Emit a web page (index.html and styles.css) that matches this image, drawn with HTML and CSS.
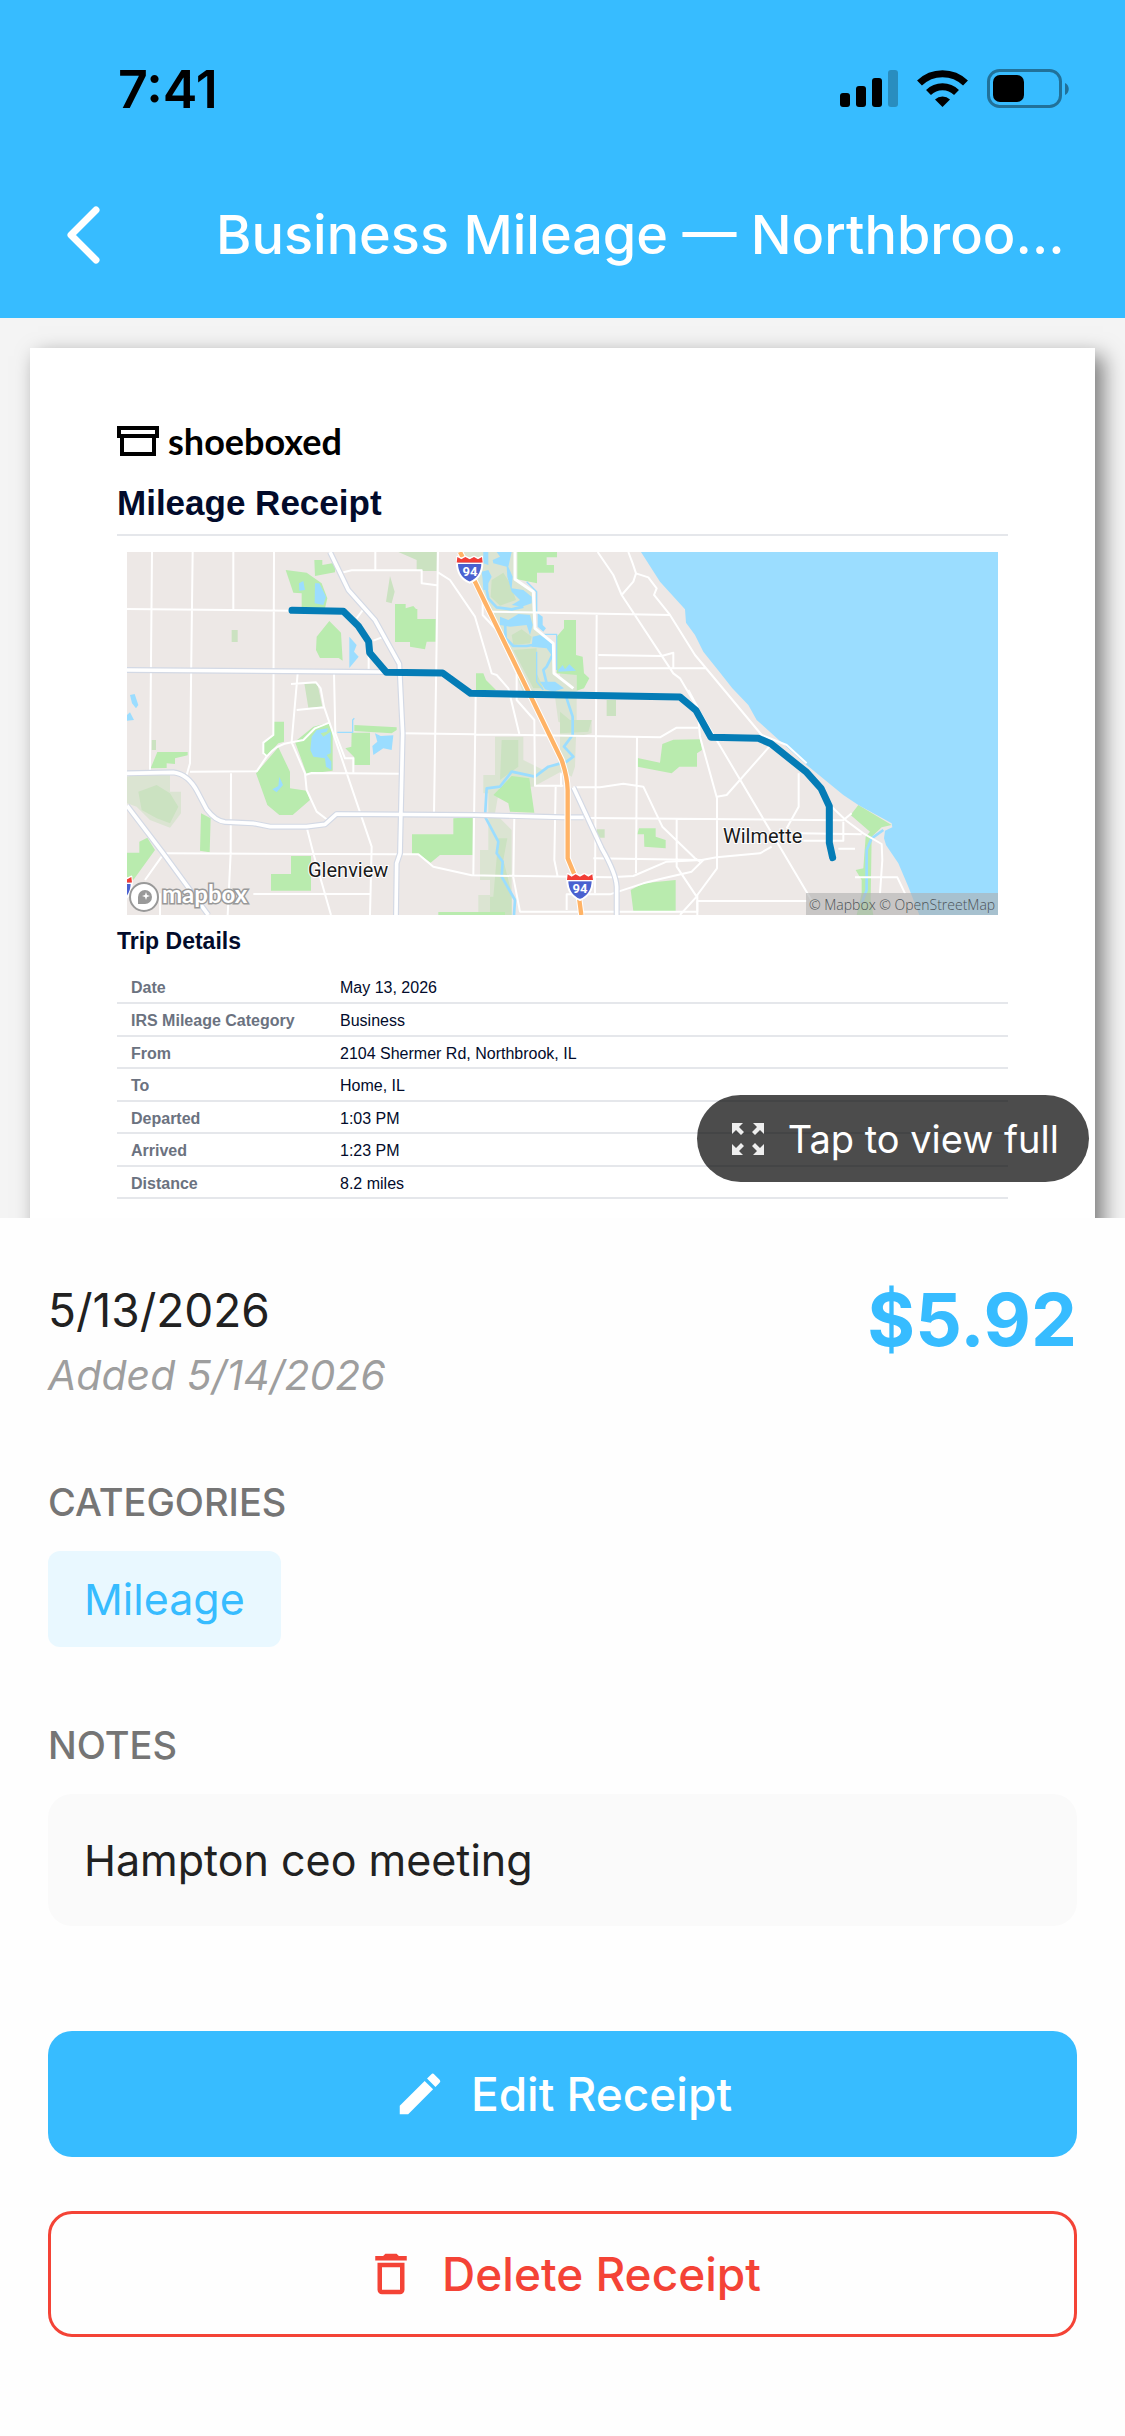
FILE: index.html
```html
<!DOCTYPE html>
<html lang="en">
<head>
    <meta charset="UTF-8">
    <meta name="viewport" content="width=device-width, initial-scale=1.0">
    <title>Business Mileage</title>
    <link rel="stylesheet" href="styles.css">
</head>
<body>
    <header class="app-header">
        <div class="status-bar">
            <span class="time">7:41</span>
            <svg class="status-icons" width="230" height="40" viewBox="0 0 230 40">
                <rect x="0" y="24" width="10" height="14" rx="3"/>
                <rect x="16" y="17" width="10" height="21" rx="3"/>
                <rect x="32" y="9" width="10" height="29" rx="3"/>
                <rect x="48" y="1" width="10" height="37" rx="3" opacity="0.25"/>
                <path d="M79.500 14A33 33 0 0 1 125.500 14" fill="none" stroke="#000" stroke-width="7"/>
                <path d="M88.500 23.500A20 20 0 0 1 116.500 23.500" fill="none" stroke="#000" stroke-width="7"/>
                <path d="M95 30.500A11 11 0 0 1 110 30.500L102.500 38Z"/>
                <rect x="148.500" y="1.500" width="72" height="36" rx="11" fill="none" stroke="#000" stroke-width="3" opacity="0.4"/>
                <rect x="153" y="6" width="31" height="27" rx="7"/>
                <path d="M225 14c5 2 5 10 0 12z" opacity="0.4"/>
            </svg>
        </div>
        <div class="nav-bar">
            <button class="back" type="button" aria-label="Back">
                <svg width="40" height="64" viewBox="0 0 40 64"><path d="M33 7L8 32L33 57" fill="none" stroke="#fff" stroke-width="7" stroke-linecap="round" stroke-linejoin="round"/></svg>
            </button>
            <h1>Business Mileage — Northbroo…</h1>
        </div>
    </header>

    <main>
        <section class="preview">
            <div class="paper">
                <div class="brand">
                    <svg width="43" height="32" viewBox="0 0 43 32" fill="none" stroke="#000" stroke-width="4">
                        <path d="M2 3H40V11H2Z M5 11V29H37V11"/>
                    </svg>
                    <span>shoeboxed</span>
                </div>
                <h2>Mileage Receipt</h2>
                <svg class="map" viewBox="0 0 871 363">
                    <rect width="871" height="363" fill="#ede8e6"/>
                    <g transform="scale(0.33333) translate(-51 -36)">
                        <!-- forest preserves -->
                        <g fill="#dbe4d2">
                            <path d="M1060 36H1220V118L1275 155L1278 262L1335 310L1332 400L1380 440V560L1345 545L1335 470L1240 460L1175 290L1110 150Z"/>
                            <path d="M1155 590H1240V660L1300 690L1380 650V680L1270 740L1170 735L1155 820L1205 870V1125H1105V1065H1140V1020H1110V930H1135V760H1120V705H1155Z"/>
                            <path d="M51 710L120 690H180V755H213V820L180 863L120 840L80 800L51 790Z"/>
                            <path d="M1350 400H1400V560L1445 540V580L1398 590L1395 680L1385 710L1350 690Z"/>
                        </g>
                        <g fill="#cbe2c1">
                            <path d="M865 36H980V93H920V60Z M840 108L854 155L845 190L828 185Z M365 270H383V306H365Z M583 430H622L637 500L595 503Z"/>
                            <path d="M85 755L140 735L180 760L205 800L180 850L140 835L95 810Z M1145 120L1180 98L1200 130L1218 180L1170 197L1142 170Z M1205 285L1235 268L1265 290L1260 310L1210 315Z M1210 330L1280 325V400L1300 445H1270Z"/>
                            <path d="M1175 600H1225V680L1170 720Z M1165 895H1192L1180 960L1205 1060V1125H1140V1070H1150Z M1350 515L1380 540L1445 540L1435 575L1350 580Z M1490 480H1518V528H1490Z M1460 868H1484V893H1460Z M125 600H138V630H125Z"/>
                        </g>
                        <!-- parks -->
                        <g fill="#b9ebae">
                            <path d="M527 90L590 98L635 130L652 175L645 205H575V160L550 158Z M613 60H637V75L675 68V97L615 108Z M658 243L693 278L698 362L686 354H630L618 330L620 290Z"/>
                            <path d="M855 192H887V205L910 198L918 207H922V237H977V305H950L945 328L900 320V306H855Z"/>
                            <path d="M1222 36H1341V52H1310V75H1332V98H1281V130L1222 118Z M1340 290L1362 265V240H1398V345L1418 350L1422 400L1438 415L1422 445L1400 452V405L1340 400Z"/>
                            <path d="M1098 400H1120L1128 420L1158 450H1098Z M492 545H522V605L505 610L470 648L460 645V605L492 585Z M505 622L540 695V745L590 752L600 780L548 825H508L472 795L438 700Z"/>
                            <path d="M555 605L610 560L655 548L668 575V692L590 702Z M733 555L860 562V570L845 580L733 573Z M725 578H780V675H733V652L706 625L724 620Z"/>
                            <path d="M142 636H233V646L195 655V672L170 670V684L122 685Z M273 820L302 835L299 937L270 932Z M51 938H88V905L112 893L135 930L70 1020L51 1012Z M543 948H603V1052H483V1002H543Z"/>
                            <path d="M1030 835L1088 832V945H990L962 968L930 945H906V883H1030Z M1150 765L1205 708L1258 715L1273 818L1200 815L1195 790Z M985 1116H1185V1125H985Z"/>
                            <path d="M1583 654L1650 668L1657 612L1690 599L1770 598L1776 630L1761 640V680H1708L1685 700L1583 680Z M1587 865H1637V890L1667 900V925L1603 920L1602 883H1582Z M1562 1050L1600 1030L1697 1020V1113H1570Z"/>
                            <path d="M2245 795L2345 855L2315 862L2285 890L2282 1080L2290 1125H2240L2255 1060V1020L2237 990L2260 985L2267 890L2280 875L2222 825Z"/>
                        </g>
                        <!-- water -->
                        <path d="M1593 36L1650 125L1725 208L1728 248L1755 285L1780 335L1828 395L1867 445L1915 495L1940 540L2010 603L2090 675L2200 765L2245 795L2345 850L2347 862L2325 872L2322 895L2328 915L2365 970L2395 1040L2428 1125H2664V36Z" fill="#9bddff"/>
                        <g fill="#9bddff">
                            <path d="M567 130L580 123L585 150L568 152Z M615 130H628L648 170L640 195L614 190Z M718 290L740 315L732 335L746 350L718 384Z M60 465L74 462L85 495L78 505L66 490Z M51 525L60 517L72 540L51 542Z"/>
                            <path d="M605 590L620 570L655 565L650 575L632 580L640 590L662 575V640L650 645L664 665V690L648 680L645 655L610 650L601 630Z M795 580L812 588L850 586L845 630L820 625L790 645L787 618L802 605Z M508 710L519 735L500 757L487 748L505 738Z"/>
                            <path d="M1120 36H1135V75L1120 70Z M1160 36H1205L1195 80L1208 110L1205 145L1240 150L1265 170V190L1235 200L1205 195L1230 180L1205 155L1192 110L1190 80L1150 70L1148 60L1170 50Z M1115 95L1135 90L1145 110L1135 130V150L1120 150L1118 120Z M1170 230L1195 240L1225 222L1260 225L1268 255L1260 285L1250 255L1200 260L1170 255Z M1268 290L1290 285L1330 310L1328 350L1310 325L1265 320Z M1283 220L1298 230V255L1308 265L1300 275L1283 260Z M1290 425L1335 425L1362 445L1330 455L1305 448Z M1345 390L1358 375L1365 388L1378 373L1398 392L1345 395Z"/>
                        </g>
                        <g fill="none" stroke="#9bddff" stroke-width="8" stroke-linejoin="round">
                            <path d="M1128 140L1135 175L1160 202L1205 208L1240 200M1185 245L1187 295L1210 318H1250L1285 312M1330 340L1310 380L1300 390L1310 430M1365 460L1388 530V585L1362 620L1390 650L1370 665L1315 680L1275 710L1205 695L1170 740L1130 745L1125 830L1165 905L1160 940L1178 965L1175 1010L1215 1080L1212 1125"/>
                            <path d="M1250 125L1280 155V215M1280 335V425L1300 450M1300 283H1340V390M682 577H728V540L733 535" stroke-width="4"/>
                            <path d="M2320 870L2285 895L2270 930V1050L2255 1090"/>
                        </g>
                        <!-- small streets -->
                        <g fill="none" stroke="#fff" stroke-width="6" stroke-linejoin="round">
                            <path d="M126 36L120 690M248 36L240 670L230 705M370 36V208M492 36L490 585L460 608V640L470 648M51 207L540 212M796 36V90M700 97L725 91H935V130L980 136M984 36L972 822M984 97L1020 120L1095 230L1145 400L1160 405L1195 445L1228 582M1118 160V225L1160 270L1220 400V480L1273 540L1275 737H1360"/>
                            <path d="M740 235L760 208M790 302L822 290M776 340V390M563 400L545 605M543 432L618 427L632 445L642 500L690 640L785 920L780 1125M560 510L642 502M672 400L676 580L705 655H730V697M240 695L440 694L470 650Q500 612 545 607L580 600L615 565L658 548M545 607L585 700L590 750L620 815L650 838M585 705L605 699L875 701"/>
                            <path d="M880 580L1380 587L1650 592L1700 563H1765M1097 470L1090 1005M363 700L362 940L353 1125M155 940L870 943H925L970 980L1085 1006L1500 1012L1570 1008L1670 965L1775 960L1820 952L1950 940L1985 920M155 950L105 1020M590 862L610 940L663 1125M430 1062H780M1213 830L1210 1012L1230 1115H1762V1083H2090M1337 740L1333 960L1343 1010M150 1060V1125M1353 700V740"/>
                            <path d="M1145 215L1400 220L1680 225M1460 225L1455 1060M1465 345L1655 348L1690 338V385M1465 385H1790M1463 36L1510 105L1535 165L1690 400L1710 415L1725 440L2110 1090M1555 36L1568 70L1578 100L1570 125L1535 165M1578 100L1615 112L1640 145L1632 165L1680 225L1755 345L1955 585L2030 615L2090 670"/>
                            <path d="M1215 36V118L1270 155L1275 265L1330 310L1332 400L1390 445" stroke-width="9"/>
                            <path d="M1735 450L1762 500L1770 590L1821 775V985L1762 1065V1125M1821 770L1850 765L1978 620M1581 592L1578 1000M1390 742H1470L1540 731L1600 740L1657 860L1755 955L1770 965M1350 833L2200 841L2225 820M1700 837V980L1760 1070L1710 1125M1450 955L1780 960L1745 995L1660 1015L1600 1030L1500 1063H1370V1110M2066 700V800L2030 865M2070 880L2255 883M2080 902H2200V845M2165 800L2210 843L2260 880L2315 912L2317 960L2310 1060M2185 926H2235M2235 1012H2362L2385 1060"/>
                        </g>
                        <!-- main roads -->
                        <g fill="none" stroke-linejoin="round">
                            <path d="M51 390L830 396M660 36L715 150L795 240L868 372L878 580L870 940L860 970L858 1125M51 700L190 697Q235 703 262 755L290 808Q315 842 345 846L430 850L480 860H590L645 853L680 822L1100 825L1360 832H1420M51 797L160 940L295 1125M1390 742L1475 925Q1518 1000 1520 1040V1125" stroke="#d3d9e5" stroke-width="18"/>
                            <path d="M51 390L830 396M660 36L715 150L795 240L868 372L878 580L870 940L860 970L858 1125M51 700L190 697Q235 703 262 755L290 808Q315 842 345 846L430 850L480 860H590L645 853L680 822L1100 825L1360 832H1420M51 797L160 940L295 1125M1390 742L1475 925Q1518 1000 1520 1040V1125" stroke="#fff" stroke-width="11"/>
                        </g>
                        <path d="M1050 36L1095 125L1355 660Q1372 710 1373 750V955L1400 1020L1414 1125" fill="none" stroke="#fff" stroke-width="19"/>
                        <path d="M1050 36L1095 125L1355 660Q1372 710 1373 750V955L1400 1020L1414 1125" fill="none" stroke="#ffb366" stroke-width="13"/>
                        <!-- trip -->
                        <path d="M546 211L700 214L745 258L776 305L779 338L829 397L998 399L1082 460L1710 471L1758 511L1803 592L1945 595L1983 611L2090 697L2133 745L2158 799V908L2168 953" fill="none" stroke="#047cb6" stroke-width="21" stroke-linecap="round" stroke-linejoin="round"/>
                        <!-- interstate shields -->
                        <g id="shield" stroke-linejoin="round">
                            <path d="M1042 50L1054 56L1066 50L1079 56L1092 50L1104 56L1116 50Q1124 110 1079 128Q1034 110 1042 50Z" fill="#4a61d0" stroke="#fff" stroke-width="6"/>
                            <path d="M1042 51L1054 58L1066 51L1079 58L1092 51L1104 58L1116 51L1118 68H1040Z" fill="#f23d35"/>
                            <path d="M1039 70H1119" stroke="#fff" stroke-width="4"/>
                        </g>
                        <use href="#shield" x="331" y="952"/>
                        <use href="#shield" x="-1052" y="960"/>
                    </g>
                    <g class="shield-label" text-anchor="middle">
                        <text x="343" y="24">94</text>
                        <text x="453" y="341">94</text>
                    </g>
                    <g class="town">
                        <text x="181" y="325">Glenview</text>
                        <text x="596" y="291">Wilmette</text>
                    </g>
                    <g stroke="#999" stroke-width="2">
                        <circle cx="17" cy="345" r="14" fill="#fff"/>
                        <path d="M11 352V345A7 7 0 1 1 18 352Z" fill="#999" stroke="none"/>
                        <path d="M19 340L20 343L23 344L20 345L19 348L18 345L15 344L18 343Z" fill="#fff" stroke="none"/>
                    </g>
                    <text class="map-logo" x="35" y="351">mapbox</text>
                    <rect x="679" y="341" width="192" height="22" fill="#afafaf" opacity="0.6"/>
                    <text class="map-credit" x="682" y="358">© Mapbox © OpenStreetMap</text>
                </svg>
                <h3>Trip Details</h3>
                <table>
                    <tr><th scope="row">Date</th><td>May 13, 2026</td></tr>
                    <tr><th scope="row">IRS Mileage Category</th><td>Business</td></tr>
                    <tr><th scope="row">From</th><td>2104 Shermer Rd, Northbrook, IL</td></tr>
                    <tr><th scope="row">To</th><td>Home, IL</td></tr>
                    <tr><th scope="row">Departed</th><td>1:03 PM</td></tr>
                    <tr><th scope="row">Arrived</th><td>1:23 PM</td></tr>
                    <tr><th scope="row">Distance</th><td>8.2 miles</td></tr>
                </table>
            </div>
            <button class="view-full" type="button">
                <svg width="32" height="32" viewBox="0 0 32 32" fill="#eee">
                    <path id="arrow" d="M0 0H11L7 4L12 9L9 12L4 7L0 11Z"/>
                    <use href="#arrow" transform="translate(32 0) scale(-1 1)"/>
                    <use href="#arrow" transform="translate(0 32) scale(1 -1)"/>
                    <use href="#arrow" transform="translate(32 32) scale(-1 -1)"/>
                </svg>
                Tap to view full
            </button>
        </section>

        <section class="details">
            <div class="summary">
                <div>
                    <p class="date">5/13/2026</p>
                    <p class="added">Added 5/14/2026</p>
                </div>
                <p class="amount">$5.92</p>
            </div>

            <h4>CATEGORIES</h4>
            <span class="chip">Mileage</span>

            <h4>NOTES</h4>
            <p class="note">Hampton ceo meeting</p>

            <div class="actions">
                <button class="btn edit" type="button">
                    <svg width="54" height="54" viewBox="0 0 24 24" fill="currentColor"><path d="M3 17.250V21h3.750L17.810 9.940l-3.750-3.750L3 17.250zM20.710 7.040a1 1 0 0 0 0-1.410l-2.340-2.340a1 1 0 0 0-1.410 0l-1.830 1.830 3.750 3.750 1.830-1.830z"/></svg>
                    Edit Receipt
                </button>
                <button class="btn delete" type="button">
                    <svg width="54" height="54" viewBox="0 0 24 24" fill="currentColor"><path d="M6 19c0 1.100.9 2 2 2h8c1.100 0 2-.9 2-2V7H6v12zM8 9h8v10H8V9zm7.500-5l-1-1h-5l-1 1H5v2h14V4z"/></svg>
                    Delete Receipt
                </button>
            </div>
        </section>
    </main>
</body>
</html>
```
FILE: styles.css
```css
* {
    box-sizing: border-box;
    margin: 0;
    padding: 0;
}
body {
    background: #fefefe;
    color: #212121;
    font-family: Inter, Roboto, sans-serif;
}
button {
    font-family: inherit;
    border: none;
    cursor: pointer;
}
svg {
    display: block;
    flex: none;
}

/* Header */
.app-header {
    background: #37bcff;
}
.status-bar {
    display: flex;
    justify-content: space-between;
    align-items: center;
    height: 150px;
    padding: 28px 55px 0 118px;
}
.time {
    color: #000;
    font-size: 52px;
    font-weight: 600;
}
.nav-bar {
    display: flex;
    align-items: center;
    height: 168px;
    padding: 2px 48px 0 63px;
}
.back {
    width: 153px;
    background: none;
}
h1 {
    flex: 1;
    overflow: hidden;
    color: #fff;
    font-size: 54px;
    font-weight: 500;
    line-height: 72px;
    white-space: nowrap;
}

/* Receipt preview */
.preview {
    position: relative;
    height: 900px;
    padding: 30px 30px 0;
    overflow: hidden;
    background: #f4f4f4;
}
.paper {
    height: 1300px;
    padding: 75px 87px;
    background: #fff;
    box-shadow: 8px 8px 20px rgba(0, 0, 0, 0.5);
    color: #020b2b;
    font-family: "Liberation Sans", Arial, sans-serif;
}
.brand {
    display: flex;
    align-items: center;
    gap: 8px;
    height: 36px;
    color: #000;
    font-family: Lato, sans-serif;
    font-size: 36px;
    font-weight: 700;
}
h2 {
    height: 77px;
    padding-top: 22px;
    border-bottom: 2px solid #e5e7eb;
    font-size: 35px;
    line-height: 44px;
}
.map {
    width: calc(100% - 20px);
    margin: 16px 10px 0;
}
.shield-label {
    fill: #fff;
    font: 700 13px Roboto, sans-serif;
}
.town {
    fill: #1a1a1a;
    stroke: #fff;
    stroke-width: 2px;
    paint-order: stroke;
    font: 20px Roboto, sans-serif;
}
.map-logo {
    fill: #fff;
    stroke: #999;
    stroke-width: 3px;
    paint-order: stroke;
    font: 700 24px Lato, sans-serif;
}
.map-credit {
    fill: #4c5357;
    font: 300 14px "Open Sans", sans-serif;
}
h3 {
    padding: 11px 0 15px;
    font-size: 23px;
    line-height: 30px;
}
table {
    width: 100%;
    border-collapse: collapse;
    font-size: 16px;
    line-height: 18px;
    text-align: left;
}
tr {
    height: 33px;
    border-bottom: 2px solid #e5e7eb;
}
tr:nth-child(odd) {
    height: 32px;
}
th, td {
    padding-top: 3px;
}
th {
    width: 223px;
    padding-left: 14px;
    color: #6b7280;
}
.view-full {
    position: absolute;
    right: 36px;
    bottom: 36px;
    display: flex;
    align-items: center;
    gap: 24px;
    height: 87px;
    padding: 0 30px 0 35px;
    border-radius: 44px;
    background: rgba(0, 0, 0, 0.7);
    color: #fff;
    font-size: 38px;
}

/* Receipt details */
.details {
    padding: 60px 48px;
}
.summary {
    display: flex;
    justify-content: space-between;
    margin-bottom: 70px;
}
.date {
    font-size: 46px;
    line-height: 64px;
}
.added {
    color: #9e9e9e;
    font-size: 41px;
    font-style: italic;
    line-height: 66px;
}
.amount {
    color: #37bcff;
    font-size: 73px;
    font-weight: 700;
    line-height: 84px;
}
h4 {
    color: #757575;
    font-size: 38px;
    font-weight: 500;
    line-height: 48px;
    margin-bottom: 25px;
}
.chip {
    display: inline-block;
    margin-bottom: 74px;
    padding: 24px 36px;
    border-radius: 12px;
    background: #e9f8ff;
    color: #37bcff;
    font-size: 43px;
    line-height: 48px;
    vertical-align: top;
}
.note {
    padding: 36px;
    border-radius: 24px;
    background: #fafafa;
    font-size: 43px;
    line-height: 60px;
}
.actions {
    display: flex;
    flex-direction: column;
    gap: 54px;
    margin-top: 105px;
}
.btn {
    display: flex;
    justify-content: center;
    align-items: center;
    gap: 24px;
    height: 126px;
    border-radius: 24px;
    font-size: 46px;
    font-weight: 500;
}
.edit {
    background: #37bcff;
    color: #fff;
}
.delete {
    border: 3px solid #f44336;
    background: none;
    color: #f44336;
}
```
